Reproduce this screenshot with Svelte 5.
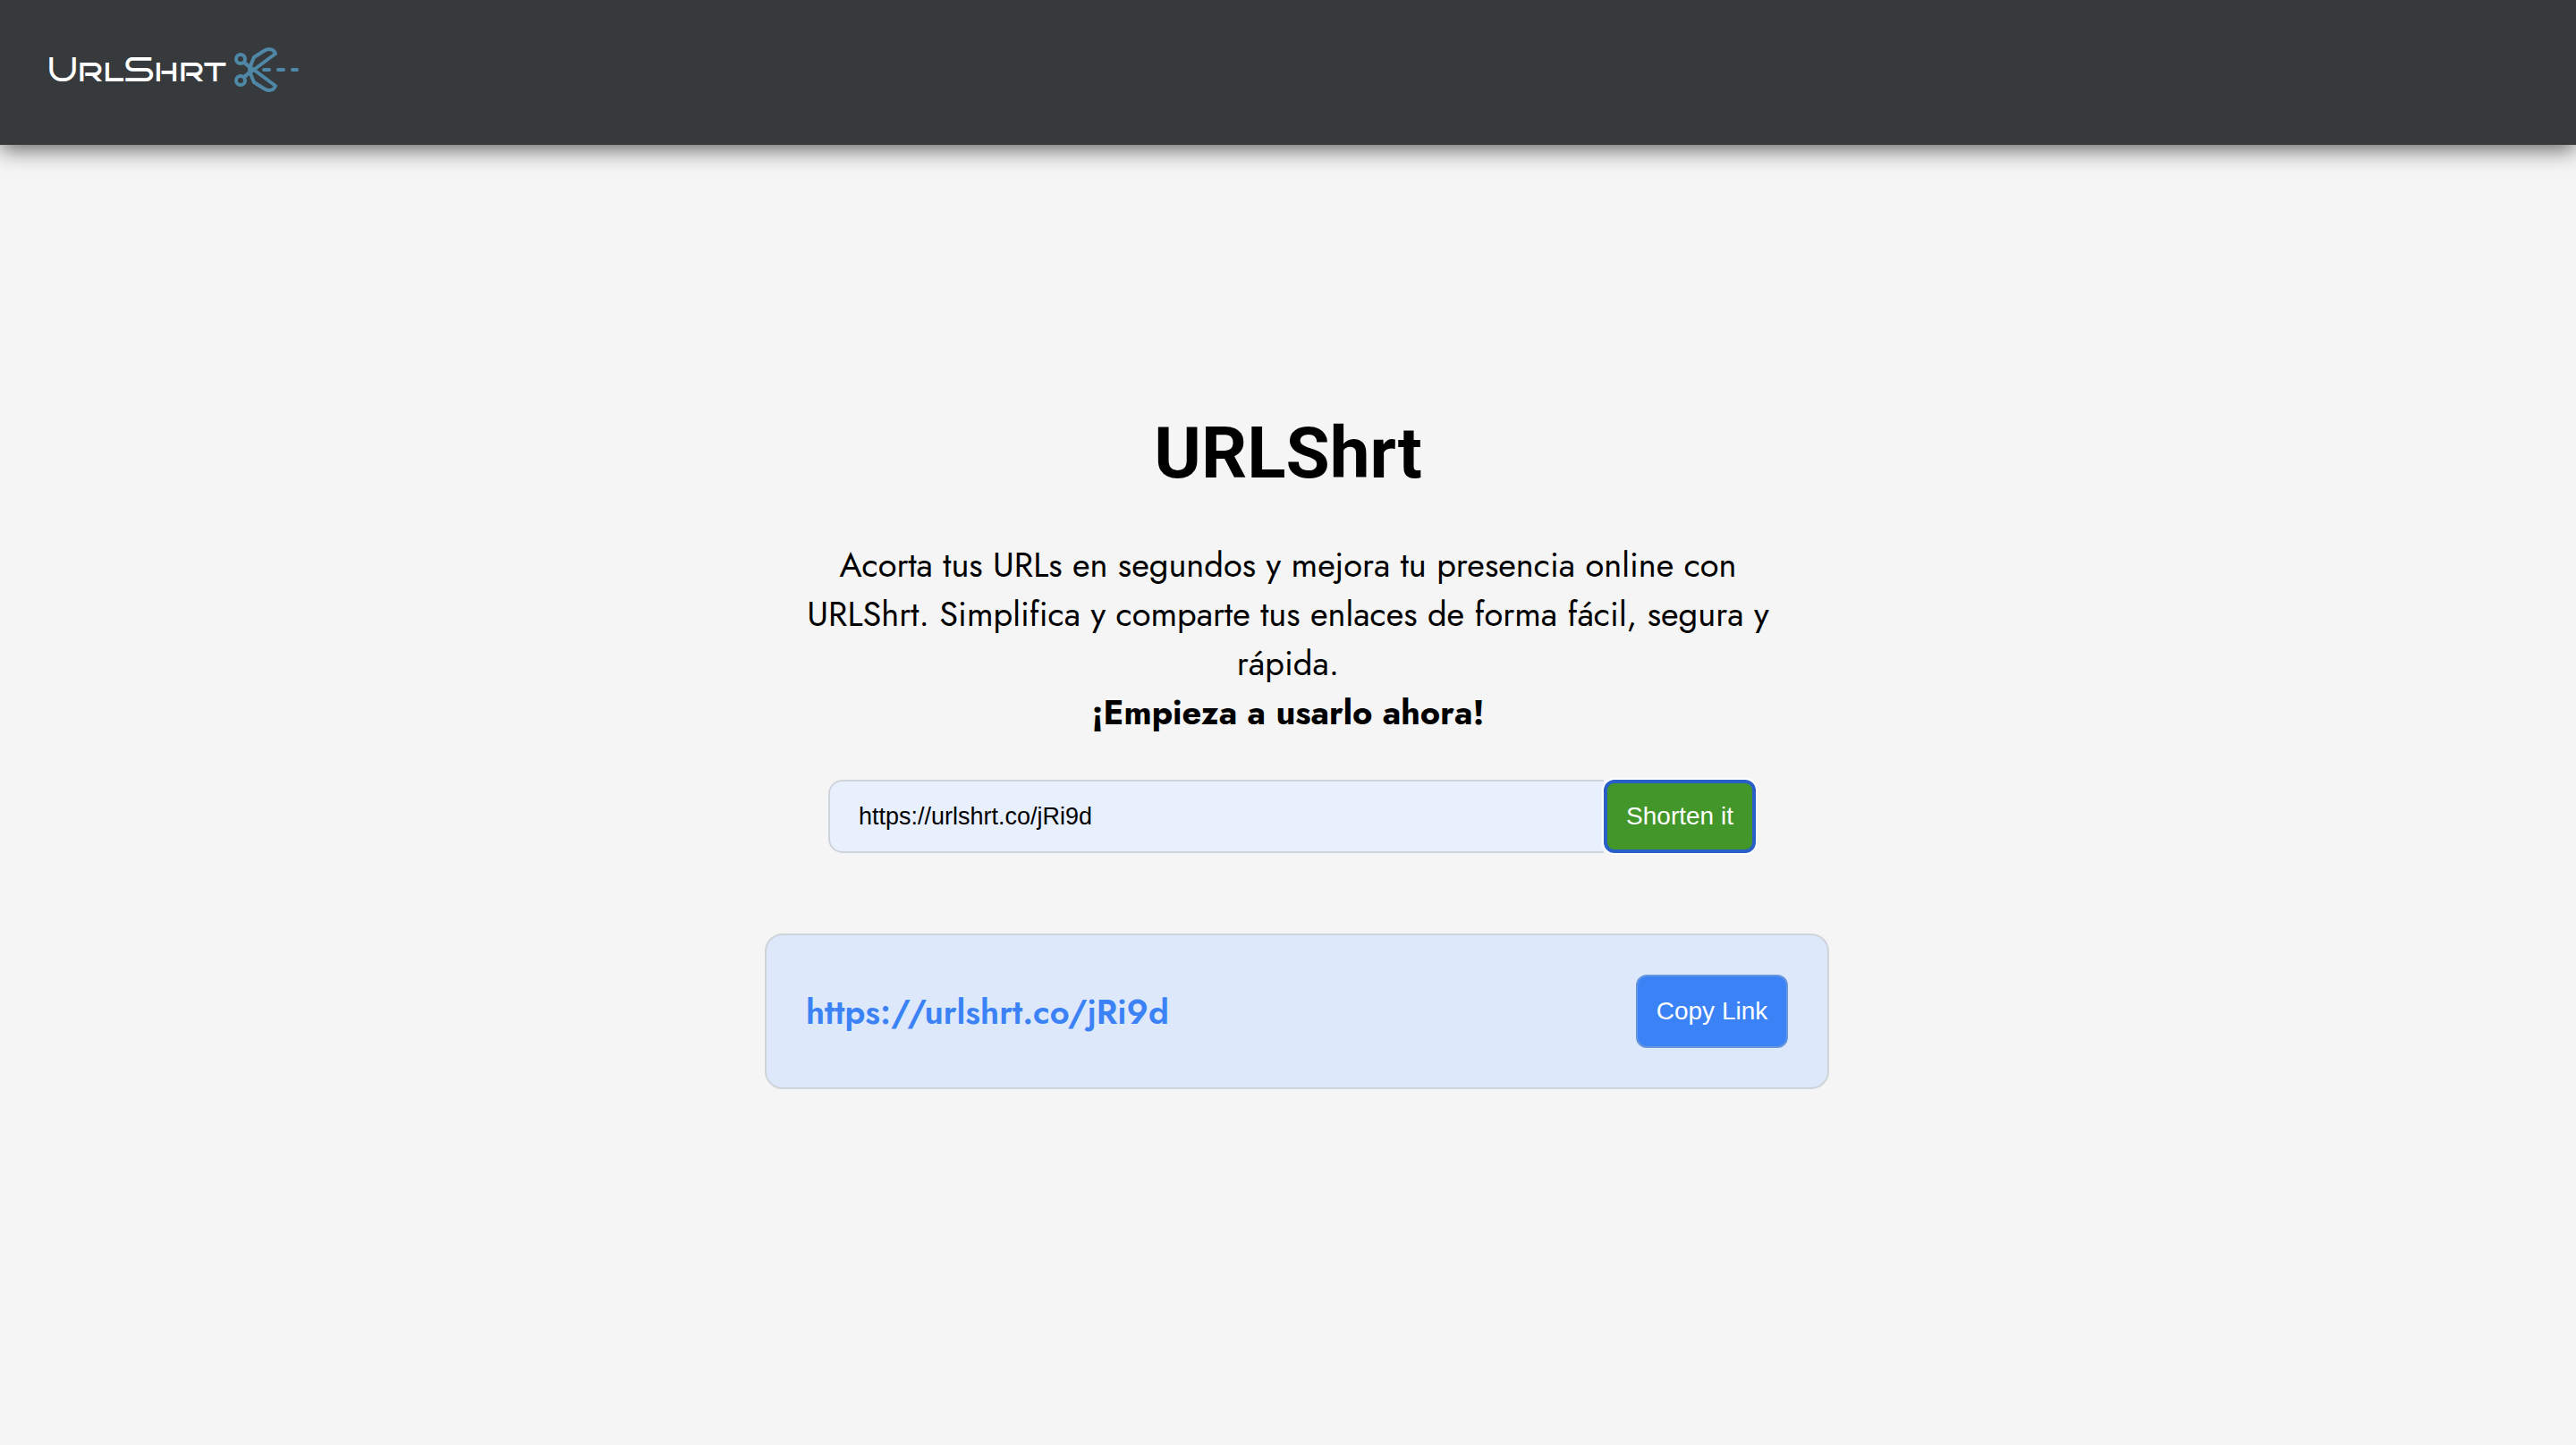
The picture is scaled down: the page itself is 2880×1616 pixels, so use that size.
<script>
  let url = $state('https://urlshrt.co/jRi9d');
  let shortUrl = $state('https://urlshrt.co/jRi9d');

  function shorten(event) {
    event.preventDefault();
    shortUrl = url;
  }

  function copy() {
    navigator.clipboard?.writeText(shortUrl);
  }
</script>

<header class="topbar">
  <a class="brand" href="/">
    <span class="wordmark">UrlShrt</span>
    <svg class="scissors" viewBox="0 0 74 52" aria-hidden="true">
      <g fill="none" stroke="#4f87a6" stroke-width="4" stroke-linecap="round" stroke-linejoin="round">
        <circle cx="7" cy="14" r="5" />
        <circle cx="7" cy="38" r="5" />
        <path d="M11 18 L18 24 M11 34 L18 28" />
        <path d="M11 34 L46 8 Q44 3 39 3 Q36 3 33 5 L22 12 Q19 18 17 26" />
        <path d="M11 18 L46 44 Q44 49 39 49 Q36 49 33 47 L22 40 Q19 34 17 26" />
        <path d="M33 26 H39 M49 26 H55 M65 26 H70" />
      </g>
    </svg>
  </a>
</header>

<main>
  <h1>URLShrt</h1>
  <p class="intro">
    Acorta tus URLs en segundos y mejora tu presencia online con URLShrt. Simplifica y comparte tus
    enlaces de forma fácil, segura y rápida.
    <strong>¡Empieza a usarlo ahora!</strong>
  </p>

  <form class="shortener" onsubmit={shorten}>
    <input type="text" aria-label="URL" bind:value={url} />
    <button class="submit" type="submit">Shorten it</button>
  </form>

  <section class="result">
    <a class="short-link" href={shortUrl}>{shortUrl}</a>
    <button class="copy" type="button" onclick={copy}>Copy Link</button>
  </section>
</main>

<style>
  :global(body) {
    background: #f5f5f5;
    color: #000;
    font-family: Jost, Lato, sans-serif;
  }

  .topbar {
    box-sizing: border-box;
    height: 162px;
    padding: 50px 53px;
    background: #363a3d;
    box-shadow: 0 4px 24px rgba(0, 0, 0, 0.65);
  }

  .brand {
    display: inline-flex;
    align-items: center;
    justify-content: space-between;
    width: 283px;
    height: 56px;
    color: #fff;
    text-decoration: none;
  }

  .wordmark {
    font: 38px/56px 'Bruno Ace SC', 'DejaVu Sans', sans-serif;
  }

  .scissors {
    flex: none;
    width: 74px;
    height: 52px;
  }

  main {
    display: flex;
    flex-direction: column;
    align-items: center;
    padding: 291px 40px 80px;
  }

  h1 {
    margin: 0;
    font: 700 80px/108px Roboto, sans-serif;
  }

  .intro {
    max-width: 1100px;
    margin: 43px 0 0;
    font-size: 38px;
    line-height: 55px;
    text-align: center;
  }

  .intro strong {
    display: block;
    font-weight: 700;
  }

  .shortener {
    display: flex;
    box-sizing: border-box;
    width: 100%;
    max-width: 1046px;
    margin-top: 48px;
    padding-left: 9px;
  }

  input {
    box-sizing: border-box;
    flex: 1;
    min-width: 0;
    height: 82px;
    padding: 0 32px;
    border: 2px solid #ced4da;
    border-right: 0;
    border-radius: 16px 0 0 16px;
    background: #e8f0fe;
    color: #000;
    font: 27px 'Liberation Sans', Arial, sans-serif;
  }

  button {
    box-sizing: border-box;
    width: 170px;
    height: 82px;
    padding: 0;
    border: 2px solid #6696dc;
    border-radius: 12px;
    color: #fff;
    font: 28px 'Liberation Sans', Arial, sans-serif;
    cursor: pointer;
  }

  .submit {
    border: 4px solid #2860c8;
    background: #43962a;
    box-shadow: 0 0 0 2px #fff;
  }

  .copy {
    background: #3b82f6;
  }

  .result {
    display: flex;
    align-items: center;
    justify-content: space-between;
    box-sizing: border-box;
    width: 100%;
    max-width: 1190px;
    margin: 90px 0 0 20px;
    padding: 44px;
    border: 2px solid #ced4da;
    border-radius: 20px;
    background: #dde8fa;
  }

  .short-link {
    color: #3b82f6;
    font-size: 38px;
    font-weight: 600;
    text-decoration: none;
  }
</style>
